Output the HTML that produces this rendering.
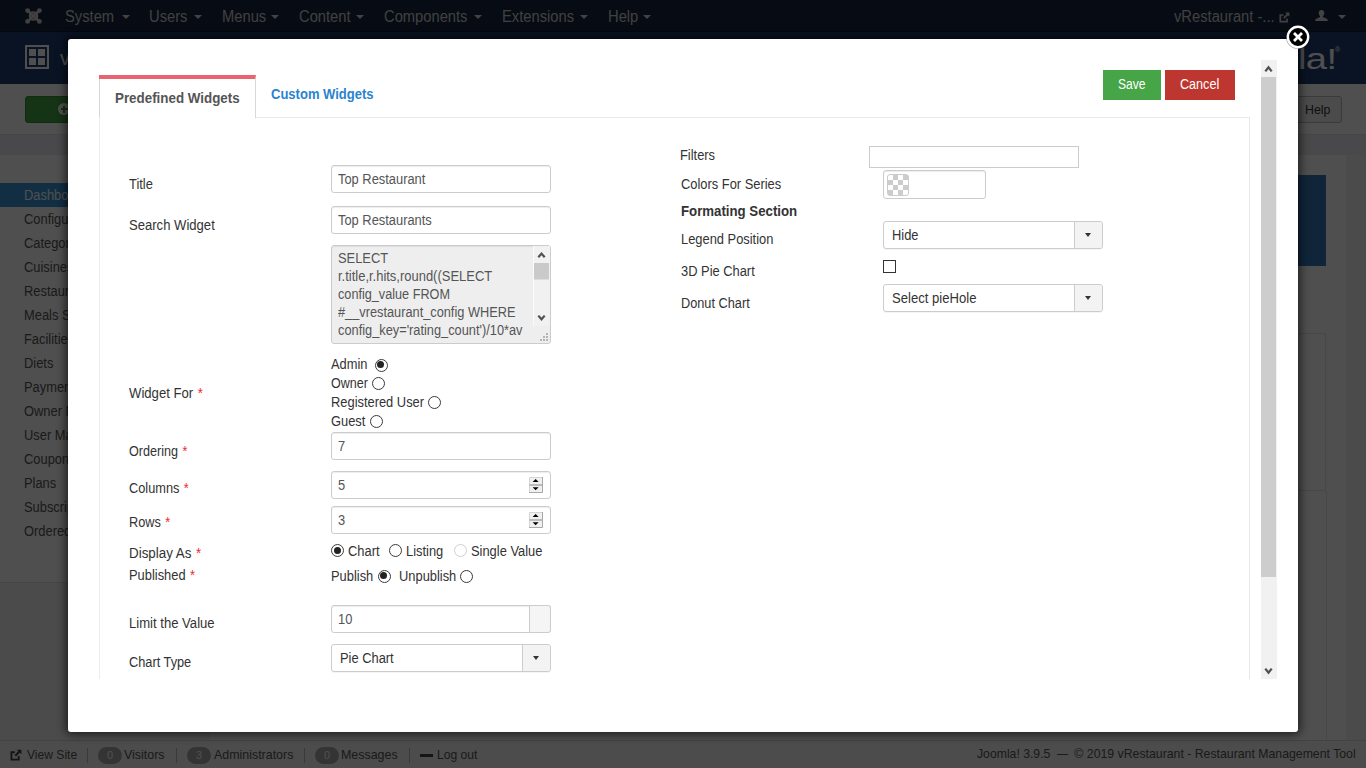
<!DOCTYPE html>
<html><head><meta charset="utf-8"><title>vRestaurant - Widgets</title>
<style>
*{box-sizing:border-box}
html,body{margin:0;padding:0;width:1366px;height:768px;overflow:hidden;background:#fff;font-family:"Liberation Sans",Arial,sans-serif;font-size:14px;color:#333}
#bg{position:absolute;left:0;top:0;width:1366px;height:768px;overflow:hidden;background:#f0f0f0}
#nav{position:absolute;left:0;top:0;width:1366px;height:32px;background:#162440;border-bottom:1px solid #0e1a30}
#nav .it{position:absolute;top:1.3px;line-height:32px;font-size:16px;color:#cfcfcf;white-space:nowrap;transform:scaleX(.92);transform-origin:0 50%}
.caret{position:absolute;top:15px;width:0;height:0;border-left:4px solid transparent;border-right:4px solid transparent;border-top:4px solid #d9d9d9}
#hdr{position:absolute;left:0;top:32px;width:1366px;height:52px;background:#1f3f70}
#hdr .ic{position:absolute;left:25px;top:13px;width:24px;height:24px;border:2px solid #fff}
#hdr .ic i{position:absolute;width:7px;height:7px;background:#fff}
#hdr .ttl{position:absolute;left:60px;top:8px;font-size:20px;line-height:36px;color:#fff;white-space:nowrap}
#tb{position:absolute;left:0;top:84px;width:1366px;height:51px;background:#fdfdfd;border-bottom:1px solid #e3e3e3}
#tb .new{position:absolute;left:25px;top:12px;width:120px;height:27px;background:#46a546;border:1px solid #3a8a3a;border-radius:3px}
#tb .new i{position:absolute;left:32px;top:6px;width:12px;height:12px;border-radius:50%;background:#fff}
#tb .new i:before{content:"";position:absolute;left:2.5px;top:5px;width:7px;height:2px;background:#46a546}
#tb .new i:after{content:"";position:absolute;left:5px;top:2.5px;width:2px;height:7px;background:#46a546}
#tb .help{position:absolute;left:1271px;top:12px;width:71px;height:27px;background:#f3f3f3;border:1px solid #bbb;border-radius:3px;font-size:13px;color:#333;line-height:25px;padding-left:33px}
#sub{position:absolute;left:0;top:135px;width:1366px;height:20px;background:#eaeaf0}
#main{position:absolute;left:0;top:155px;width:1346px;height:428px;background:#fff;border-bottom:1px solid #ddd}
#main2{position:absolute;left:210px;top:155px;width:1136px;height:585px;background:#fff}
#vline{position:absolute;left:1326px;top:491px;width:1px;height:249px;background:#e6e6e6}
#side{position:absolute;left:0;top:183px;width:200px}
#side .s{height:24px;line-height:24px;padding-left:24px;font-size:14px;color:#555;white-space:nowrap}
#side .s span{display:inline-block;transform:scaleX(.92);transform-origin:0 50%}
#side .s.a{background:#3896d9;color:#fff}
#blue{position:absolute;left:1200px;top:175px;width:126px;height:91px;background:#3578b7}
#box2{position:absolute;left:1100px;top:333px;width:226px;height:158px;border:1px solid #e6e6e6}
#status{position:absolute;left:0;top:740px;width:1366px;height:28px;background:#f4f4f4;border-top:1px solid #d8d8d8;font-size:13px;color:#555}
#status .x{position:absolute;top:-1px;line-height:29px;white-space:nowrap;transform:scaleX(.93);transform-origin:0 50%}
#status .b{position:absolute;top:6px;height:17px;border-radius:9px;background:#a8a8a8;color:#fff;font-size:11px;line-height:17px;text-align:center}
#status .sep{position:absolute;top:7px;width:1px;height:15px;background:#bbb}
#ov{position:absolute;left:0;top:0;width:1366px;height:768px;background:rgba(0,0,0,.69)}
#modal{position:absolute;left:68px;top:39px;width:1230px;height:693px;background:#fff;border-radius:3px;box-shadow:0 0 10px 2px rgba(0,0,0,.65)}
#in{position:absolute;left:0;top:0;width:1366px;height:768px}
.t{position:absolute;white-space:nowrap;line-height:16px;transform-origin:0 50%}
.req{color:#f0262b;margin-left:1px}
.tabline{position:absolute;left:255px;top:117px;width:995px;height:1px;background:#e9e9e9}
.tableft{position:absolute;left:99px;top:79px;width:1px;height:600px;background:linear-gradient(#d6d6d6 0,#d6d6d6 38px,#ececec 38px)}
.tabright{position:absolute;left:1249px;top:117px;width:1px;height:562px;background:#e8e8e8}
.tab{position:absolute;left:99px;top:75px;width:157px;height:43px;border-top:4px solid #ea6470;border-right:1px solid #d8d8d8}
.btn{position:absolute;top:70px;height:30px}
.inp{position:absolute;border:1px solid #ccc;border-radius:3px;background:#fff;box-shadow:inset 0 1px 1px rgba(0,0,0,.075)}
.inp.ta{background:#eee}
.tsb{position:absolute;left:533px;top:246px;width:17px;height:80px;background:#f1f1f1;border-left:1px solid #fafafa;padding-top:1px}
.grip,.spin{position:absolute}
.radio{position:absolute;width:13px;height:13px;border:1.3px solid #3a3a3a;border-radius:50%;background:#fff}
.radio.on:after{content:"";position:absolute;left:1.7px;top:1.7px;width:7px;height:7px;border-radius:50%;background:#222}
.radio.dis{border-color:#cfcfcf;border-width:1px}
.addon{position:absolute;left:529px;top:605px;width:22px;height:28px;border:1px solid #ccc;border-radius:0 3px 3px 0;background:#f5f5f5}
.chz{position:absolute;border:1px solid #ccc;border-radius:3px;background:#fff;height:28px;box-shadow:0 1px 0 rgba(0,0,0,.04)}
.chz b{position:absolute;right:0;top:0;width:28px;height:26px;background:#f3f3f3;border-left:1px solid #ccc;border-radius:0 3px 3px 0}
.chz b:after{content:"";position:absolute;left:9.7px;top:11px;border-left:3.7px solid transparent;border-right:3.7px solid transparent;border-top:4px solid #333}
.finp{position:absolute;left:869px;top:146px;width:210px;height:22px;border:1px solid #ccc;background:#fff}
.sw{position:absolute;left:887px;top:174px;width:22px;height:22px;border:1px solid #ccc;border-radius:3px;background:repeating-conic-gradient(#ccc 0% 25%,#fff 0% 50%) 0 0/10px 10px}
.cb{position:absolute;left:883px;top:260px;width:13px;height:13px;border:1px solid #333;background:#fff}
.msb{position:absolute;left:1261px;top:60px;width:16px;height:619px;background:#f1f1f1}
.msb .thumb{position:absolute;left:0;top:17px;width:15px;height:500px;background:#cdcdcd}
#close{position:absolute;left:1285px;top:24px;width:26px;height:26px}
</style></head><body>
<div id="bg">
 <div id="nav">
  <svg style="position:absolute;left:25px;top:8px" width="17" height="16" viewBox="0 0 17 16"><g fill="none" stroke="#cfcfcf"><path d="M2.6 2.6 L14.4 13.4 M14.4 2.6 L2.6 13.4" stroke-width="2.7"/><circle cx="8.5" cy="8" r="3.7" stroke-width="2.2"/></g><g fill="#cfcfcf"><circle cx="2.6" cy="2.6" r="2.4"/><circle cx="14.4" cy="2.6" r="2.4"/><circle cx="2.6" cy="13.4" r="2.4"/><circle cx="14.4" cy="13.4" r="2.4"/></g></svg>
  <span class="it" style="left:65px">System</span><i class="caret" style="left:121.5px"></i>
  <span class="it" style="left:149px">Users</span><i class="caret" style="left:194px"></i>
  <span class="it" style="left:222px">Menus</span><i class="caret" style="left:270.5px"></i>
  <span class="it" style="left:299px">Content</span><i class="caret" style="left:356px"></i>
  <span class="it" style="left:384px">Components</span><i class="caret" style="left:473.5px"></i>
  <span class="it" style="left:502px">Extensions</span><i class="caret" style="left:579.5px"></i>
  <span class="it" style="left:608px">Help</span><i class="caret" style="left:642.5px"></i>
  <span class="it" style="left:1174px">vRestaurant -...</span>
  <svg style="position:absolute;left:1279px;top:12px" width="11" height="11" viewBox="0 0 11 11"><path d="M8 6.5 V9.7 H1.3 V3 H4.5" fill="none" stroke="#cfcfcf" stroke-width="1.7"/><path d="M6.2 0.6 H10.4 V4.8 Z" fill="#cfcfcf"/><path d="M9 2 L4.8 6.2" stroke="#cfcfcf" stroke-width="1.9"/></svg>
  <svg style="position:absolute;left:1315px;top:10px" width="13" height="11" viewBox="0 0 13 11"><path d="M6.5 0 C8.3 0 9.3 1.3 9.3 3 C9.3 4.6 8.4 5.6 7.8 6.2 C7.8 7 8.5 7.4 10 7.9 C11.8 8.5 12.8 9 12.8 11 H0.2 C0.2 9 1.2 8.5 3 7.9 C4.5 7.4 5.2 7 5.2 6.2 C4.6 5.6 3.7 4.6 3.7 3 C3.7 1.3 4.7 0 6.5 0Z" fill="#d9d9d9"/></svg>
  <i class="caret" style="left:1338px"></i>
 </div>
 <div id="hdr"><div class="ic"><i style="left:2px;top:2px"></i><i style="left:11px;top:2px"></i><i style="left:2px;top:11px"></i><i style="left:11px;top:11px"></i></div><div class="ttl">vRestaurant - Widgets</div>
  <div style="position:absolute;left:1298px;top:5px;font-size:30px;line-height:44px;color:#fff;letter-spacing:-0.5px;white-space:nowrap;transform:scaleX(1.27);transform-origin:0 50%">la!</div>
  <div style="position:absolute;left:1335px;top:14px;font-size:7px;line-height:8px;color:#fff">®</div>
 </div>
 <div id="tb"><div class="new"><i></i></div><div class="help"><span style="display:inline-block;transform:scaleX(.95);transform-origin:0 50%">Help</span></div></div>
 <div id="sub"></div>
 <div id="main"></div><div id="main2"></div><div id="vline"></div>
 <div id="blue"></div><div id="box2"></div>
 <div id="side">
  <div class="s a"><span>Dashboard</span></div><div class="s"><span>Configuration</span></div><div class="s"><span>Categories</span></div><div class="s"><span>Cuisines</span></div><div class="s"><span>Restaurants</span></div><div class="s"><span>Meals Schedule</span></div><div class="s"><span>Facilities</span></div><div class="s"><span>Diets</span></div><div class="s"><span>Payment Options</span></div><div class="s"><span>Owner Management</span></div><div class="s"><span>User Management</span></div><div class="s"><span>Coupons</span></div><div class="s"><span>Plans</span></div><div class="s"><span>Subscriptions</span></div><div class="s"><span>Ordered Plans</span></div>
 </div>
 <div id="status">
  <svg style="position:absolute;left:10px;top:8px" width="12" height="12" viewBox="0 0 11 11"><path d="M8 6.5 V9.7 H1.3 V3 H4.5" fill="none" stroke="#444" stroke-width="1.7"/><path d="M6.2 0.6 H10.4 V4.8 Z" fill="#444"/><path d="M9 2 L4.8 6.2" stroke="#444" stroke-width="1.9"/></svg>
  <span class="x" style="left:27px">View Site</span><i class="sep" style="left:87px"></i>
  <span class="b" style="left:98px;width:24px">0</span><span class="x" style="left:124px;transform:scaleX(.955)">Visitors</span><i class="sep" style="left:176px"></i>
  <span class="b" style="left:187px;width:24px">3</span><span class="x" style="left:214px;transform:scaleX(.955)">Administrators</span><i class="sep" style="left:304px"></i>
  <span class="b" style="left:315px;width:24px">0</span><span class="x" style="left:341px;transform:scaleX(.955)">Messages</span><i class="sep" style="left:409px"></i>
  <i style="position:absolute;left:420px;top:13px;width:13px;height:3px;background:#444"></i><span class="x" style="left:437px">Log out</span>
  <span class="x" style="left:977px;top:-2px;transform:scaleX(.94)">Joomla! 3.9.5</span><span class="x" style="left:1057px;top:-2px;transform:scaleX(.85)">—</span><span class="x" id="cr" style="right:10px;top:-2px;transform-origin:100% 50%;transform:scaleX(.945)">© 2019 vRestaurant - Restaurant Management Tool</span>
 </div>
</div>
<div id="ov"></div>
<div id="modal"></div>
<div id="in">
<div class="tabline"></div><div class="tableft"></div><div class="tabright"></div>
<div class="tab"></div>
<div class="t" style="left:115px;top:89.55px;font-size:14px;color:#555;font-weight:700;transform:scaleX(0.955);">Predefined Widgets</div>
<div class="t" style="left:271px;top:85.55px;font-size:14px;color:#2a83cf;font-weight:700;transform:scaleX(0.93);">Custom Widgets</div>
<div class="btn" style="left:1103px;width:58px;background:#46a546"></div>
<div class="btn" style="left:1165px;width:70px;background:#bd362f"></div>
<div class="t" style="left:1118px;top:76.30px;font-size:14px;color:#fff;font-weight:400;transform:scaleX(0.86);">Save</div>
<div class="t" style="left:1179.5px;top:76.30px;font-size:14px;color:#fff;font-weight:400;transform:scaleX(0.9);">Cancel</div>
<div class="t" style="left:129px;top:175.55px;font-size:14px;color:#333;font-weight:400;transform:scaleX(0.92);">Title</div>
<div class="t" style="left:129px;top:216.55px;font-size:14px;color:#333;font-weight:400;transform:scaleX(0.934);">Search Widget</div>
<div class="t" style="left:129px;top:384.55px;font-size:14px;color:#333;font-weight:400;transform:scaleX(0.938);">Widget For <span class="req">*</span></div>
<div class="t" style="left:129px;top:442.55px;font-size:14px;color:#333;font-weight:400;transform:scaleX(0.9);">Ordering <span class="req">*</span></div>
<div class="t" style="left:129px;top:479.55px;font-size:14px;color:#333;font-weight:400;transform:scaleX(0.912);">Columns <span class="req">*</span></div>
<div class="t" style="left:129px;top:514.05px;font-size:14px;color:#333;font-weight:400;transform:scaleX(0.91);">Rows <span class="req">*</span></div>
<div class="t" style="left:129px;top:544.55px;font-size:14px;color:#333;font-weight:400;transform:scaleX(0.955);">Display As <span class="req">*</span></div>
<div class="t" style="left:129px;top:567.05px;font-size:14px;color:#333;font-weight:400;transform:scaleX(0.92);">Published <span class="req">*</span></div>
<div class="t" style="left:129px;top:615.05px;font-size:14px;color:#333;font-weight:400;transform:scaleX(0.935);">Limit the Value</div>
<div class="t" style="left:129px;top:654.05px;font-size:14px;color:#333;font-weight:400;transform:scaleX(0.912);">Chart Type</div>
<div class="inp " style="left:331px;top:165px;width:220px;height:28px"></div>
<div class="t" style="left:338px;top:170.55px;font-size:14px;color:#555;font-weight:400;transform:scaleX(0.92);">Top Restaurant</div>
<div class="inp " style="left:331px;top:206px;width:220px;height:28px"></div>
<div class="t" style="left:338px;top:211.55px;font-size:14px;color:#555;font-weight:400;transform:scaleX(0.92);">Top Restaurants</div>
<div class="inp ta" style="left:331px;top:245px;width:220px;height:99px"></div>
<div class="t" style="left:338px;top:250.05px;font-size:14px;color:#555;font-weight:400;transform:scaleX(0.92);">SELECT</div>
<div class="t" style="left:338px;top:268.15px;font-size:14px;color:#555;font-weight:400;transform:scaleX(0.926);">r.title,r.hits,round((SELECT</div>
<div class="t" style="left:338px;top:286.25px;font-size:14px;color:#555;font-weight:400;transform:scaleX(0.905);">config_value FROM</div>
<div class="t" style="left:338px;top:304.35px;font-size:14px;color:#555;font-weight:400;transform:scaleX(0.912);">#__vrestaurant_config WHERE</div>
<div class="t" style="left:338px;top:322.45px;font-size:14px;color:#555;font-weight:400;transform:scaleX(0.914);">config_key='rating_count')/10*av</div>
<div class="tsb"><svg width="16" height="79" viewBox="0 0 16 79"><rect x="0" y="16" width="15" height="16.5" fill="#cacaca"/><path d="M4.3 10.3 L7.5 6.6 L10.7 10.3" fill="none" stroke="#505050" stroke-width="2.2"/><path d="M4.3 68.6 L7.5 72.3 L10.7 68.6" fill="none" stroke="#505050" stroke-width="2.2"/></svg></div>
<svg class="grip" style="left:539px;top:332px" width="10" height="10" viewBox="0 0 10 10"><g fill="#b5b5b5"><rect x="7" y="1" width="2" height="2"/><rect x="4" y="4" width="2" height="2"/><rect x="7" y="4" width="2" height="2"/><rect x="1" y="7" width="2" height="2"/><rect x="4" y="7" width="2" height="2"/><rect x="7" y="7" width="2" height="2"/></g></svg>
<div class="t" style="left:331px;top:356.25px;font-size:14px;color:#333;font-weight:400;transform:scaleX(0.92);">Admin</div>
<i class="radio on" style="left:374.5px;top:358.5px"></i>
<div class="t" style="left:331px;top:375.35px;font-size:14px;color:#333;font-weight:400;transform:scaleX(0.895);">Owner</div>
<i class="radio" style="left:371.5px;top:377.25px"></i>
<div class="t" style="left:331px;top:394.05px;font-size:14px;color:#333;font-weight:400;transform:scaleX(0.92);">Registered User</div>
<i class="radio" style="left:427.5px;top:395.5px"></i>
<div class="t" style="left:331px;top:413.05px;font-size:14px;color:#333;font-weight:400;transform:scaleX(0.92);">Guest</div>
<i class="radio" style="left:369.5px;top:414.5px"></i>
<div class="inp " style="left:331px;top:432px;width:220px;height:28px"></div>
<div class="t" style="left:338px;top:438.30px;font-size:14px;color:#555;font-weight:400;transform:scaleX(0.92);">7</div>
<div class="inp " style="left:331px;top:471px;width:220px;height:28px"></div>
<div class="t" style="left:338px;top:477.05px;font-size:14px;color:#555;font-weight:400;transform:scaleX(0.92);">5</div>
<div class="inp " style="left:331px;top:506px;width:220px;height:28px"></div>
<div class="t" style="left:338px;top:512.05px;font-size:14px;color:#555;font-weight:400;transform:scaleX(0.92);">3</div>
<svg class="spin" style="left:529px;top:476.6px" width="14" height="16" viewBox="0 0 14 16"><rect x="0" y="0" width="14" height="16" fill="#f0f0f0"/><path d="M0.5 16 V0.5 H14" fill="none" stroke="#d4d4d4"/><path d="M13.5 0 V15.5 H0" fill="none" stroke="#a9a9a9"/><rect x="0.5" y="7.3" width="13" height="1.4" fill="#a6a6a6"/><path d="M3.6 5 L6.6 2 L9.6 5Z" fill="#000"/><path d="M3.6 10.2 L6.6 13.2 L9.6 10.2Z" fill="#000"/></svg>
<svg class="spin" style="left:529px;top:511.6px" width="14" height="16" viewBox="0 0 14 16"><rect x="0" y="0" width="14" height="16" fill="#f0f0f0"/><path d="M0.5 16 V0.5 H14" fill="none" stroke="#d4d4d4"/><path d="M13.5 0 V15.5 H0" fill="none" stroke="#a9a9a9"/><rect x="0.5" y="7.3" width="13" height="1.4" fill="#a6a6a6"/><path d="M3.6 5 L6.6 2 L9.6 5Z" fill="#000"/><path d="M3.6 10.2 L6.6 13.2 L9.6 10.2Z" fill="#000"/></svg>
<i class="radio on" style="left:331.0px;top:544.0px"></i>
<div class="t" style="left:348px;top:542.55px;font-size:14px;color:#333;font-weight:400;transform:scaleX(0.92);">Chart</div>
<i class="radio" style="left:388.5px;top:544.0px"></i>
<div class="t" style="left:406px;top:542.55px;font-size:14px;color:#333;font-weight:400;transform:scaleX(0.92);">Listing</div>
<i class="radio dis" style="left:453.5px;top:544.0px"></i>
<div class="t" style="left:471px;top:542.55px;font-size:14px;color:#333;font-weight:400;transform:scaleX(0.92);">Single Value</div>
<div class="t" style="left:331px;top:568.30px;font-size:14px;color:#333;font-weight:400;transform:scaleX(0.92);">Publish</div>
<i class="radio on" style="left:377.5px;top:569.5px"></i>
<div class="t" style="left:399px;top:568.30px;font-size:14px;color:#333;font-weight:400;transform:scaleX(0.92);">Unpublish</div>
<i class="radio" style="left:459.5px;top:569.5px"></i>
<div class="inp " style="left:331px;top:605px;width:220px;height:28px"></div>
<div class="addon"></div>
<div class="t" style="left:338px;top:611.05px;font-size:14px;color:#555;font-weight:400;transform:scaleX(0.92);">10</div>
<div class="chz" style="left:331px;top:644px;width:220px"><b></b></div><div class="t" style="left:340px;top:650.05px;font-size:14px;color:#333;font-weight:400;transform:scaleX(0.92);">Pie Chart</div>
<div class="t" style="left:680px;top:147.05px;font-size:14px;color:#333;font-weight:400;transform:scaleX(0.92);">Filters</div>
<div class="finp"></div>
<div class="t" style="left:681px;top:176.30px;font-size:14px;color:#333;font-weight:400;transform:scaleX(0.92);">Colors For Series</div>
<div class="inp" style="left:883px;top:170px;width:103px;height:29px"></div>
<div class="sw"></div>
<div class="t" style="left:681px;top:202.55px;font-size:14px;color:#333;font-weight:700;transform:scaleX(0.945);">Formating Section</div>
<div class="t" style="left:681px;top:231.30px;font-size:14px;color:#333;font-weight:400;transform:scaleX(0.92);">Legend Position</div>
<div class="chz" style="left:883px;top:221px;width:220px"><b></b></div><div class="t" style="left:892px;top:227.05px;font-size:14px;color:#333;font-weight:400;transform:scaleX(0.92);">Hide</div>
<div class="t" style="left:681px;top:263.05px;font-size:14px;color:#333;font-weight:400;transform:scaleX(0.92);">3D Pie Chart</div>
<div class="cb"></div>
<div class="t" style="left:681px;top:294.80px;font-size:14px;color:#333;font-weight:400;transform:scaleX(0.91);">Donut Chart</div>
<div class="chz" style="left:883px;top:284px;width:220px"><b></b></div><div class="t" style="left:892px;top:290.05px;font-size:14px;color:#333;font-weight:400;transform:scaleX(0.935);">Select pieHole</div>
<div class="msb"><div class="thumb"></div><svg style="position:absolute;left:0;top:0" width="16" height="17" viewBox="0 0 16 17"><path d="M4.3 11.4 L7.5 7.4 L10.7 11.4" fill="none" stroke="#505050" stroke-width="2.3"/></svg><svg style="position:absolute;left:0;bottom:0" width="16" height="17" viewBox="0 0 16 17"><path d="M4.3 6.6 L7.5 10.6 L10.7 6.6" fill="none" stroke="#505050" stroke-width="2.3"/></svg></div>
<svg id="close" viewBox="0 0 26 26"><circle cx="13" cy="13" r="12" fill="rgba(0,0,0,.35)"/><circle cx="13" cy="13" r="10.2" fill="#000" stroke="#fff" stroke-width="2.4"/><path d="M9 9 L17 17 M17 9 L9 17" stroke="#fff" stroke-width="2.8" stroke-linecap="butt"/></svg>
</div>
</body></html>
